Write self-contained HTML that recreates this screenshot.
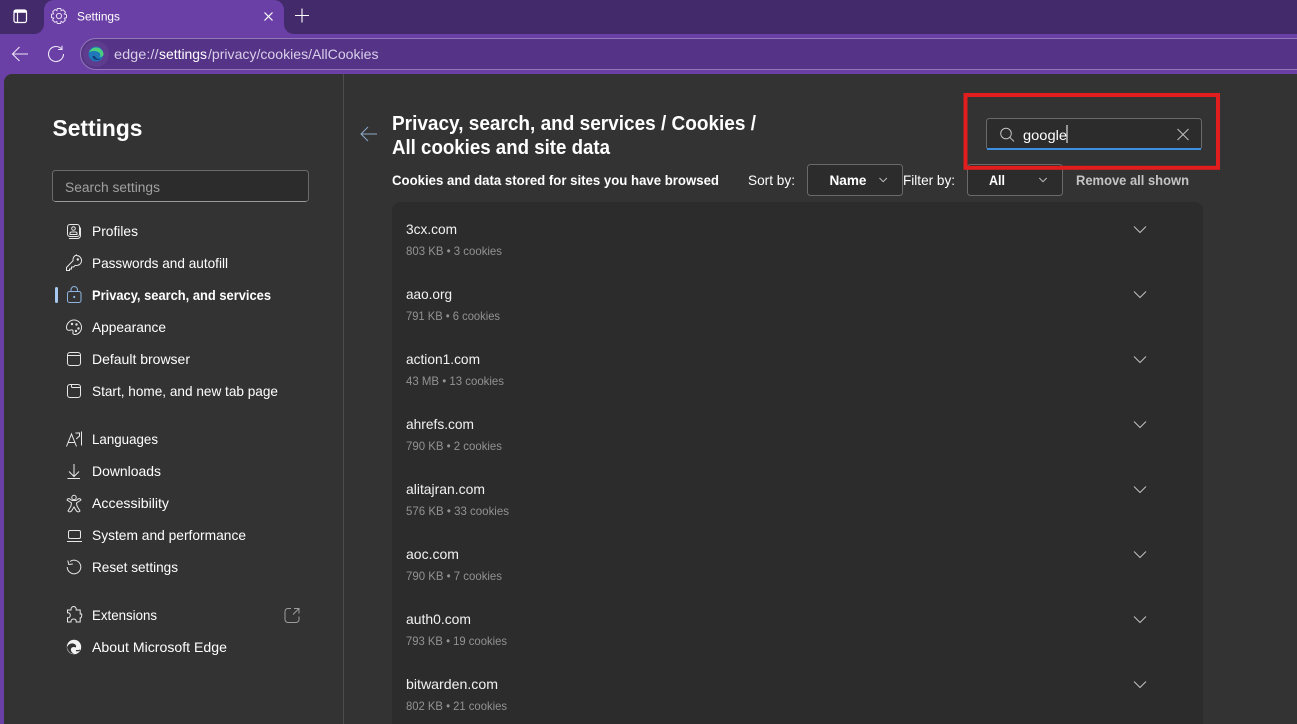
<!DOCTYPE html>
<html><head><meta charset="utf-8"><title>Settings</title>
<style>
html,body{margin:0;padding:0;background:#333;width:1297px;height:724px;overflow:hidden}
svg{display:block;position:absolute;left:0;top:0}
text{font-family:"Liberation Sans",sans-serif;fill:#fff;font-size:14px;white-space:pre}
.n{fill:#f2f2f2;font-size:14px}
.s{fill:#929292;font-size:12px}
.i{fill:none;stroke:#e8e8e8;stroke-width:1}
.c{fill:none;stroke:#c0c0c0;stroke-width:1}
.b{font-weight:bold}
</style></head><body>
<svg width="1297" height="724" viewBox="0 0 1297 724" xmlns="http://www.w3.org/2000/svg">
<rect width="1297" height="724" fill="#6b40a6"/>
<rect width="1297" height="34" fill="#432a6b"/>
<!-- tab -->
<path d="M34 34a10 10 0 0 0 10-10V10a10 10 0 0 1 10-10H274a10 10 0 0 1 10 10V24a10 10 0 0 0 10 10Z" fill="#6b40a6"/>
<!-- tab actions icon -->
<rect x="14" y="10" width="12.500" height="12.500" rx="2" fill="none" stroke="#fff" stroke-width="1.200"/>
<path d="M14 11.500H26.500" stroke="#fff" stroke-width="2.600" fill="none"/>
<path d="M17.500 12V22.500" stroke="#fff" stroke-width="1.200" fill="none"/>
<!-- gear -->
<g transform="translate(59 16)" fill="none" stroke="#e6def2" stroke-width="1">
<circle r="2.600"/>
<path d="M-1.700-7.500H1.700L2.200-5.400 4.200-6.200 6.500-3.800 5.300-2 7.500-1.300V1.700L5.400 2.200 6.300 4.200 3.900 6.500 2.100 5.300 1.600 7.500H-1.700L-2.200 5.400-4.200 6.300-6.500 3.900-5.300 2.100-7.500 1.600V-1.700L-5.400-2.200-6.300-4.200-3.900-6.500-2.100-5.300Z"/>
</g>
<text x="77" y="20.500" style="font-size:12px" textLength="43" lengthAdjust="spacingAndGlyphs">Settings</text>
<path d="M264.500 12.500l8 8M272.500 12.500l-8 8" stroke="#fff" stroke-width="1.200"/>
<path d="M302 8.500V22.500M295 15.500H309" stroke="#fff" stroke-width="1.100"/>
<!-- toolbar -->
<path d="M12.500 54H28M19.500 47L12.500 54 19.500 61" fill="none" stroke="#ece6f5" stroke-width="1.100"/>
<path d="M63.500 54a7.500 7.500 0 1 1-2.300-5.400M62 45.800v3.700h-3.800" fill="none" stroke="#ece6f5" stroke-width="1.100"/>
<!-- address -->
<path d="M1298 38.500H96a15.500 15.500 0 0 0 0 31H1298Z" fill="#553387" stroke="#8f78b5" stroke-width="1"/>
<circle cx="96" cy="54" r="13" fill="#5e3d8e"/>
<circle cx="96" cy="54" r="7.500" fill="#1f78b8"/>
<path d="M89 52.500a7.500 7.500 0 0 1 14.500 1.500c0 2-2 3-4 3 1-1 1.200-2.500.3-3.800C98 51 92 50 89 52.500Z" fill="#4cd07f"/>
<path d="M92.500 56c0 2.300 2 4 4.500 4 1.500 0 3-.6 4-1.500-2.700 1-5.500.2-6-2.500Z" fill="#123e7a"/>
<text x="114" y="59" style="fill:#d8cfe8" textLength="44.500" lengthAdjust="spacingAndGlyphs">edge://</text>
<text x="159" y="59" style="fill:#fff" textLength="48" lengthAdjust="spacingAndGlyphs">settings</text>
<text x="208" y="59" style="fill:#d8cfe8" textLength="170.500" lengthAdjust="spacingAndGlyphs">/privacy/cookies/AllCookies</text>
<!-- content -->
<path d="M4 724V82a8 8 0 0 1 8-8H1297V724Z" fill="#333"/>
<rect x="343" y="74" width="1" height="650" fill="#4d4d4d"/>
<!-- sidebar -->
<text x="52.500" y="136" class="b" style="font-size:23px" textLength="90" lengthAdjust="spacingAndGlyphs">Settings</text>
<rect x="52.500" y="170.500" width="256" height="31" rx="3" fill="#2c2c2c" stroke="#6a6a6a"/>
<path d="M55 201.500H306" stroke="#9a9a9a"/>
<text x="65" y="192" style="fill:#a0a0a0;font-size:13.500px" textLength="95" lengthAdjust="spacingAndGlyphs">Search settings</text>

<rect x="55" y="287" width="3" height="16" rx="1.500" fill="#a6c8f0"/>
<g class="i">
<!-- profile -->
<rect x="67.500" y="224.500" width="12" height="12" rx="2.500"/><circle cx="73.500" cy="228.500" r="1.800"/><path d="M70 234.500v-1a1.500 1.500 0 0 1 1.500-1.500h4a1.500 1.500 0 0 1 1.500 1.500v1H70Z"/><path d="M69 238.500h8.500a3 3 0 0 0 3-3v-8"/>
<!-- key -->
<path d="M76.500 255.500a5 5 0 0 1 5 5 5 5 0 0 1-6.300 4.800L73.500 267H71.500v2H69.500v1.500H66.500v-3l6.500-6.800a5 5 0 0 1 3.500-5.700Z"/><circle cx="77.800" cy="259.500" r=".7" fill="#e8e8e8"/>
<!-- lock -->
<g stroke="#8fb4e0"><rect x="67.500" y="291.500" width="13.500" height="11" rx="2"/><path d="M71 291.500v-1.700a3.200 3.200 0 0 1 6.500 0v1.700"/><circle cx="74.200" cy="297" r=".6" fill="#8fb4e0"/></g>
<!-- palette -->
<path d="M74 320a7.500 7.500 0 0 1 7.500 7.500c0 4-3.300 7-6.500 7-2 0-2.500-1.300-2-2.500.5-1.500-.5-2.500-2-2-1.500.5-4.500.8-4.500-2.500C66.500 323.500 70 320 74 320Z"/><circle cx="72" cy="324" r=".7"/><circle cx="76.500" cy="324.500" r=".7"/><circle cx="78.500" cy="328.500" r=".7"/><circle cx="76" cy="331" r=".7"/>
<!-- default browser -->
<rect x="67.500" y="352.500" width="13" height="13" rx="2.500"/><path d="M67.500 355.500h13"/>
<!-- start -->
<rect x="67.500" y="384.500" width="13" height="13" rx="2.500"/><path d="M71.500 384.500v2a1 1 0 0 0 1 1h8"/>
<!-- languages -->
<path d="M66.500 446.500L71.500 434l5 12.500M68 442.500h7M75.500 433h4v3l-3.300 3M81.500 431.500v14"/>
<!-- download -->
<path d="M74 464v12M69 471.500l5 5 5-5M67.500 478.500h12.500"/>
<!-- accessibility -->
<circle cx="74" cy="497.500" r="2.200"/><path d="M67 500c2 1.500 4 2.500 4.500 3l-.5 3-3 5c1 1.300 2.500 1 3.500 0l2.500-4 2.500 4c1 1 2.500 1.300 3.500 0l-3-5-.5-3c.5-.5 2.500-1.500 4.500-3-.7-1.800-2-1.500-3-1l-2 1.500h-4l-2-1.500c-1-.5-2.300-.8-3 1Z"/>
<!-- laptop -->
<rect x="68.500" y="530.500" width="12" height="8" rx="1.500"/><path d="M67 541.500h15"/>
<!-- reset -->
<path d="M70 561.500a6.800 6.800 0 1 1-2.800 5.500M67.800 560.500l1 4 4-.5"/>
<!-- extensions -->
<path d="M71 610c-.3-2 1-3.500 2.700-3.500s2.800 1.500 2.500 3.500h4v4c2-.3 1.500 0 1.500 1.500s-1 2.800-1.500 2.500v4h-4c.3-2-.8-3-2.500-3s-3 1-2.700 3h-3.500v-4.200c1.800.2 2.800-1 2.800-2.500s-1-2.800-2.800-2.500V610Z"/>
<!-- external -->
<path d="M291 608.500h-3a3 3 0 0 0-3 3v8a3 3 0 0 0 3 3h8a3 3 0 0 0 3-3v-3M294 608.500h5v5M299 608.500l-6 6" stroke="#9c9c9c"/>
</g>
<!-- edge white -->
<circle cx="74" cy="647" r="7.200" fill="#f4f4f4"/>
<path d="M67 647.500c1-3.500 4.500-4.800 7-3.800 2 .8 2.700 2.500 1.700 3.800-1.700-.8-3.700-.6-4.500.9-1 1.700.3 4.300 3 5.500-3.500.2-6.500-3-7.200-6.400Z" fill="#333"/>
<path d="M76 650.500c1.500.5 3 .2 4-.5" stroke="#333" stroke-width="1.200" fill="none"/>
<text x="92" y="236" textLength="46" lengthAdjust="spacingAndGlyphs">Profiles</text>
<text x="92" y="268" textLength="136" lengthAdjust="spacingAndGlyphs">Passwords and autofill</text>
<text x="92" y="300" class="b" textLength="179" lengthAdjust="spacingAndGlyphs">Privacy, search, and services</text>
<text x="92" y="332" textLength="74" lengthAdjust="spacingAndGlyphs">Appearance</text>
<text x="92" y="364" textLength="98" lengthAdjust="spacingAndGlyphs">Default browser</text>
<text x="92" y="396" textLength="186" lengthAdjust="spacingAndGlyphs">Start, home, and new tab page</text>
<text x="92" y="444" textLength="66" lengthAdjust="spacingAndGlyphs">Languages</text>
<text x="92" y="476" textLength="69" lengthAdjust="spacingAndGlyphs">Downloads</text>
<text x="92" y="508" textLength="77" lengthAdjust="spacingAndGlyphs">Accessibility</text>
<text x="92" y="540" textLength="154" lengthAdjust="spacingAndGlyphs">System and performance</text>
<text x="92" y="572" textLength="86" lengthAdjust="spacingAndGlyphs">Reset settings</text>
<text x="92" y="620" textLength="65" lengthAdjust="spacingAndGlyphs">Extensions</text>
<text x="92" y="652" textLength="135" lengthAdjust="spacingAndGlyphs">About Microsoft Edge</text>

<!-- header -->
<path d="M361 134H377M368 127L361 134 368 141" fill="none" stroke="#8fa9c8" stroke-width="1"/>
<text x="392" y="130" class="b" style="font-size:20px" textLength="364" lengthAdjust="spacingAndGlyphs">Privacy, search, and services / Cookies /</text>
<text x="392" y="154" class="b" style="font-size:20px" textLength="218" lengthAdjust="spacingAndGlyphs">All cookies and site data</text>
<text x="392" y="185" class="b" style="font-size:13.500px" textLength="327" lengthAdjust="spacingAndGlyphs">Cookies and data stored for sites you have browsed</text>
<text x="748" y="185" textLength="47" lengthAdjust="spacingAndGlyphs">Sort by:</text>
<rect x="807.500" y="164.500" width="95" height="31" rx="3" fill="#2c2c2c" stroke="#6a6a6a"/>
<text x="829.500" y="185" class="b" textLength="37" lengthAdjust="spacingAndGlyphs">Name</text>
<path d="M879.500 178l3.700 3.700 3.700-3.700" class="c"/>
<text x="903" y="185" textLength="52" lengthAdjust="spacingAndGlyphs">Filter by:</text>
<rect x="967.500" y="164.500" width="95" height="31" rx="3" fill="#2c2c2c" stroke="#6a6a6a"/>
<text x="989" y="185" class="b" textLength="16" lengthAdjust="spacingAndGlyphs">All</text>
<path d="M1039.300 178l3.700 3.700 3.700-3.700" class="c"/>
<text x="1076" y="185" class="b" style="fill:#c4c4c4" textLength="113" lengthAdjust="spacingAndGlyphs">Remove all shown</text>

<!-- red box -->
<rect x="965.500" y="95" width="252.500" height="72.800" fill="none" stroke="#e11d1d" stroke-width="4"/>
<!-- search -->
<rect x="986.500" y="118.500" width="215" height="31" rx="3" fill="#2c2c2c" stroke="#6a6a6a"/>
<path d="M987 149H1201" stroke="#3b8ee0" stroke-width="2"/>
<circle cx="1006" cy="133.500" r="5.300" fill="none" stroke="#c0c0c0" stroke-width="1"/>
<path d="M1009.800 137.300l4.200 4.200" stroke="#c0c0c0" stroke-width="1"/>
<text x="1023" y="140" textLength="44" lengthAdjust="spacingAndGlyphs">google</text>
<rect x="1066.500" y="125" width="1" height="18" fill="#fff"/>
<path d="M1177.500 129l11 11M1188.500 129l-11 11" stroke="#c0c0c0" stroke-width="1"/>

<!-- list -->
<path d="M392 724V210a8 8 0 0 1 8-8H1195a8 8 0 0 1 8 8V724Z" fill="#2c2c2c"/>
<g>
<text x="406" y="234" class="n" textLength="51" lengthAdjust="spacingAndGlyphs">3cx.com</text>
<text x="406" y="255" class="s" textLength="96" lengthAdjust="spacingAndGlyphs">803 KB • 3 cookies</text>
<path d="M1134 226.500l6 6 6-6" class="c"/>
<text x="406" y="299" class="n" textLength="46" lengthAdjust="spacingAndGlyphs">aao.org</text>
<text x="406" y="320" class="s" textLength="94" lengthAdjust="spacingAndGlyphs">791 KB • 6 cookies</text>
<path d="M1134 291.500l6 6 6-6" class="c"/>
<text x="406" y="364" class="n" textLength="74" lengthAdjust="spacingAndGlyphs">action1.com</text>
<text x="406" y="385" class="s" textLength="98" lengthAdjust="spacingAndGlyphs">43 MB • 13 cookies</text>
<path d="M1134 356.500l6 6 6-6" class="c"/>
<text x="406" y="429" class="n" textLength="68" lengthAdjust="spacingAndGlyphs">ahrefs.com</text>
<text x="406" y="450" class="s" textLength="96" lengthAdjust="spacingAndGlyphs">790 KB • 2 cookies</text>
<path d="M1134 421.500l6 6 6-6" class="c"/>
<text x="406" y="494" class="n" textLength="79" lengthAdjust="spacingAndGlyphs">alitajran.com</text>
<text x="406" y="515" class="s" textLength="103" lengthAdjust="spacingAndGlyphs">576 KB • 33 cookies</text>
<path d="M1134 486.500l6 6 6-6" class="c"/>
<text x="406" y="559" class="n" textLength="53" lengthAdjust="spacingAndGlyphs">aoc.com</text>
<text x="406" y="580" class="s" textLength="96" lengthAdjust="spacingAndGlyphs">790 KB • 7 cookies</text>
<path d="M1134 551.500l6 6 6-6" class="c"/>
<text x="406" y="624" class="n" textLength="65" lengthAdjust="spacingAndGlyphs">auth0.com</text>
<text x="406" y="645" class="s" textLength="101" lengthAdjust="spacingAndGlyphs">793 KB • 19 cookies</text>
<path d="M1134 616.500l6 6 6-6" class="c"/>
<text x="406" y="689" class="n" textLength="92" lengthAdjust="spacingAndGlyphs">bitwarden.com</text>
<text x="406" y="710" class="s" textLength="101" lengthAdjust="spacingAndGlyphs">802 KB • 21 cookies</text>
<path d="M1134 681.500l6 6 6-6" class="c"/>
</g>
</svg>
</body></html>
